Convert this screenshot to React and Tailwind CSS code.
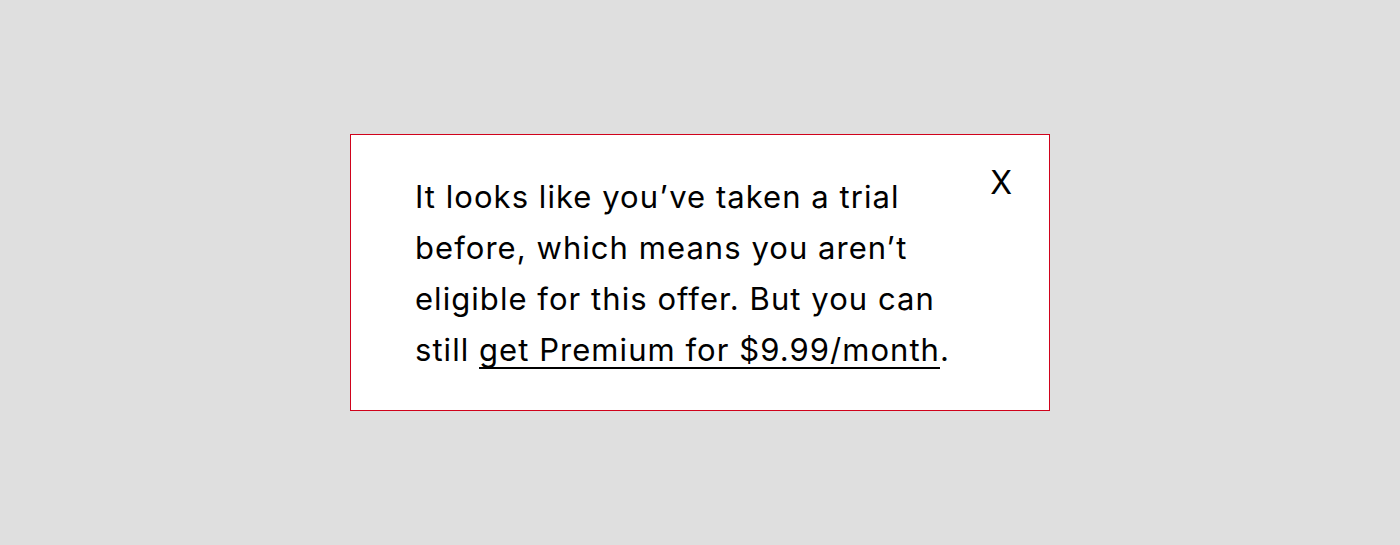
const App = () => {
    return (
        <div className="h-[545px] w-full bg-[#dfdfdf] flex items-center justify-center" style={{fontFamily: "Inter, 'Noto Sans', sans-serif"}}>
            <div className="w-[700px] h-[277px] bg-white border border-[#d0021b] flex justify-between pl-[64px] pr-[37px] pt-[36px]">
                <p className="text-[31px] leading-[51px] text-black tracking-[1.05px]">
                    It looks like you’ve taken a trial<br />
                    before, which means you aren’t<br />
                    eligible for this offer. But you can<br />
                    still <a href="#" className="underline underline-offset-[6px] decoration-2 [text-decoration-skip-ink:none]">get Premium for $9.99/month</a>.
                </p>
                <button className="text-[32px] leading-none text-black -mt-[4px] h-fit">X</button>
            </div>
        </div>
    );
}

export default App;
